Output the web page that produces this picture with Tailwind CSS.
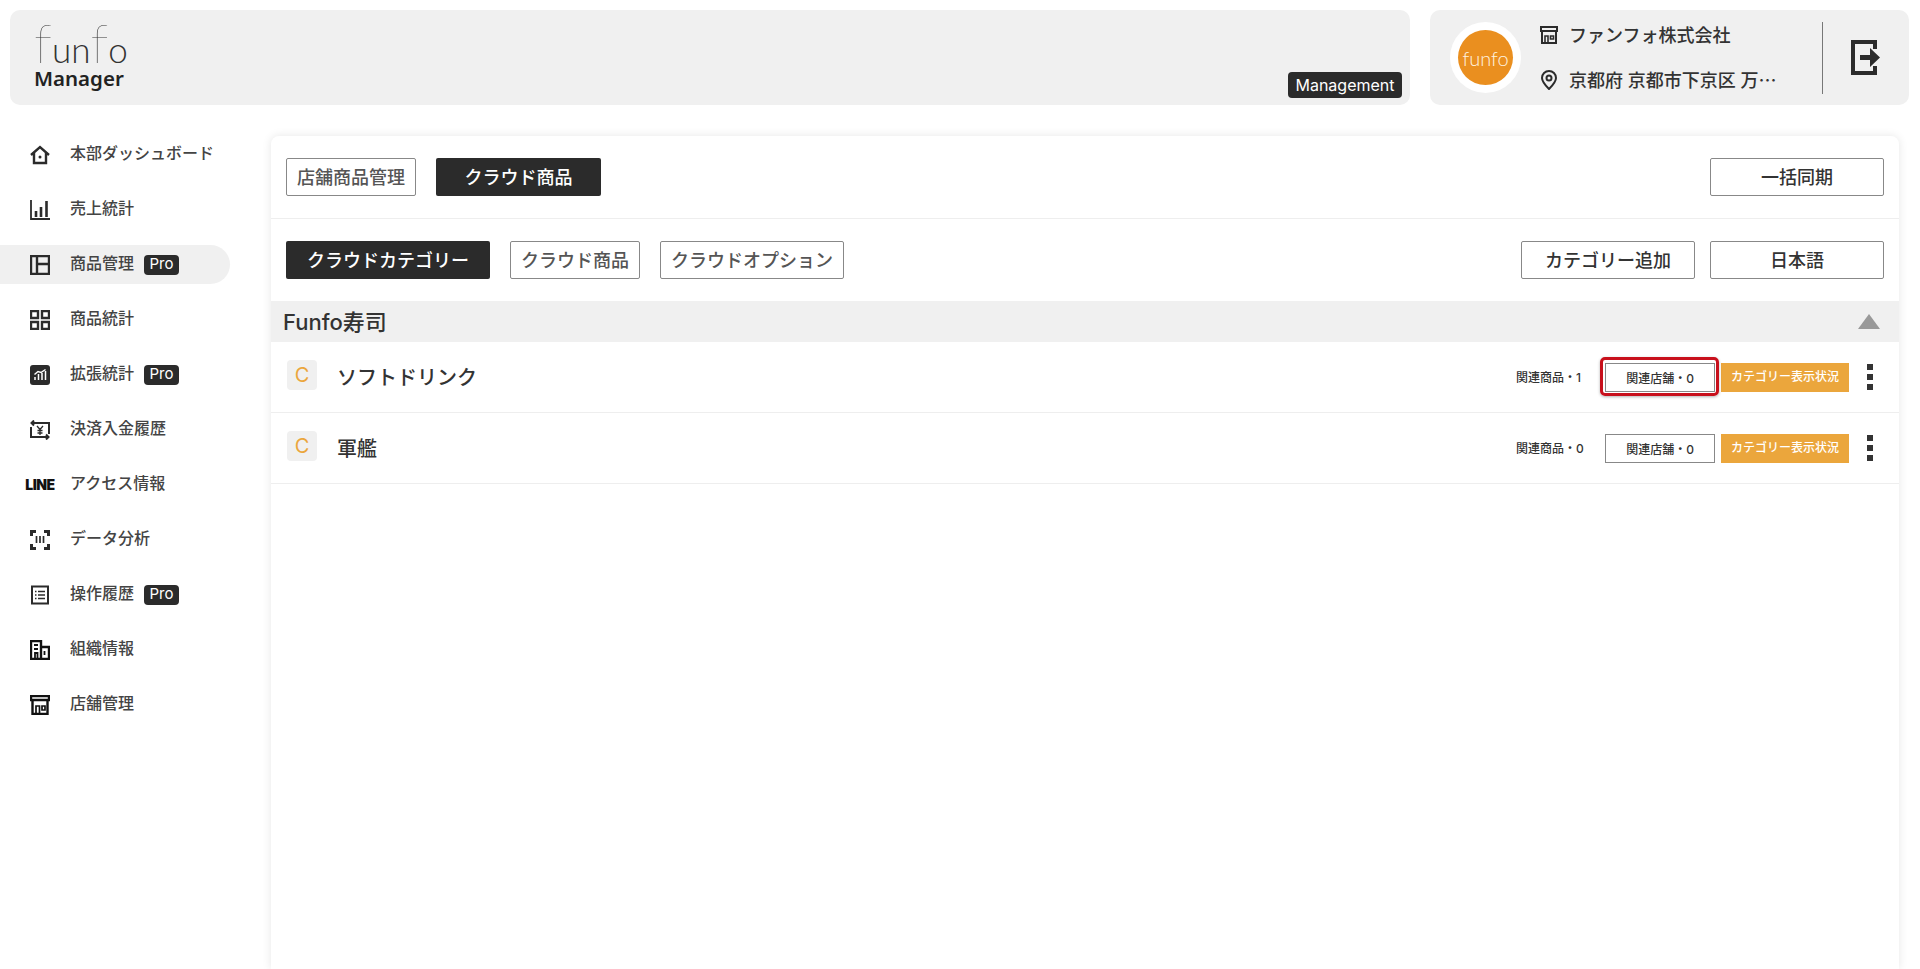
<!DOCTYPE html>
<html lang="ja">
<head>
<meta charset="utf-8">
<script src="https://cdn.jsdelivr.net/npm/@tailwindcss/browser@4"></script>
<title>funfo Manager</title>
</head>
<body class="bg-white text-[#333] font-['Inter','Noto_Sans_CJK_JP',sans-serif]">
<div class="flex flex-col h-[969px] overflow-hidden">
  <header class="flex gap-[20px] pt-[10px] pl-[10px] pr-[11px] h-[105px] shrink-0">
    <div class="flex-1 bg-[#f0f0f0] rounded-[10px] flex justify-between items-end pl-[24px] pr-[8px] pb-[7px]">
      <div class="flex flex-col self-start">
        <span class="font-['Lato',sans-serif] font-light h-[56px] leading-[66px] text-[35px] text-[#333] whitespace-nowrap"><span class="font-thin text-[54px]">f</span>un<span class="font-thin text-[54px]">f</span>o</span>
        <span class="font-['Noto_Sans',sans-serif] font-semibold text-[20.5px] leading-[24px] text-[#222]">Manager</span>
      </div>
      <span class="bg-[#2b2b2b] text-white rounded-[4px] w-[114px] h-[26px] flex items-center justify-center text-[16px]">Management</span>
    </div>
    <div class="w-[479px] bg-[#f0f0f0] rounded-[10px] flex items-center pl-[20px]">
      <div class="w-[71px] h-[71px] rounded-full bg-white flex items-center justify-center shrink-0">
        <div class="w-[55px] h-[55px] rounded-full bg-[#ea8f1f] flex items-center justify-center font-['Lato',sans-serif] font-light text-[#fff3e0] text-[20px]">funfo</div>
      </div>
      <div class="ml-[19px] w-[282px] flex flex-col gap-[24px] text-[18px] leading-[21px] text-[#333] font-medium">
        <div class="flex items-center gap-[11px]">
          <svg class="w-[18px] h-[18px] shrink-0" viewBox="0 0 18 18" fill="none" stroke="#2b2b2b" stroke-width="2"><path d="M1 1h16v4H1zM2 5v12h14V5"/><path d="M5 16v-6h3v6M10.500 10h3v3h-3z" stroke-width="1.600"/></svg>
          <span>ファンフォ株式会社</span>
        </div>
        <div class="flex items-center gap-[11px]">
          <svg class="w-[18px] h-[20px] shrink-0" viewBox="0 0 18 20" fill="none" stroke="#2b2b2b" stroke-width="2"><path d="M9 19c-4-4-7-7-7-11a7 7 0 0 1 14 0c0 4-3 7-7 11z"/><circle cx="9" cy="8" r="2.500"/></svg>
          <span class="whitespace-nowrap">京都府 京都市下京区 万⋯</span>
        </div>
      </div>
      <div class="w-px h-[72px] bg-[#777] shrink-0"></div>
      <svg class="ml-[28px] w-[30px] h-[35px]" viewBox="0 0 30 35" fill="none"><path d="M24 9V2H2v31h22v-7" stroke="#2b2b2b" stroke-width="4"/><path d="M9 15h10V8l10 9.500L19 27v-7H9z" fill="#2b2b2b"/></svg>
    </div>
  </header>

  <div class="flex flex-1 min-h-0">
    <nav class="w-[271px] shrink-0 pt-[30px] flex flex-col gap-[16px] text-[16px] font-medium text-[#444]">
      <a class="w-[230px] h-[39px] flex items-center">
        <span class="w-[70px] flex justify-center pl-[10px] shrink-0"><svg class="w-[20px] h-[20px]" viewBox="0 0 20 20" fill="none" stroke="#2b2b2b" stroke-width="2.400"><path d="M1 10 10 2l9 8"/><path d="M4 8v10h12V8"/><circle cx="10" cy="12" r="1.500" fill="#2b2b2b" stroke="none"/></svg></span>
        <span class="-mt-[4px]">本部ダッシュボード</span>
      </a>
      <a class="w-[230px] h-[39px] flex items-center">
        <span class="w-[70px] flex justify-center pl-[10px] shrink-0"><svg class="w-[20px] h-[20px]" viewBox="0 0 20 20" fill="none" stroke="#2b2b2b"><path d="M1 0v19h19" stroke-width="1.800"/><path d="M6 11v6M11 7v10M16.500 1v16" stroke-width="2.600"/></svg></span>
        <span class="-mt-[4px]">売上統計</span>
      </a>
      <a class="w-[230px] h-[39px] flex items-center bg-[#f0f0f0] rounded-r-full">
        <span class="w-[70px] flex justify-center pl-[10px] shrink-0"><svg class="w-[20px] h-[20px]" viewBox="0 0 20 20" fill="none" stroke="#2b2b2b" stroke-width="2.400"><path d="M1 1h18v18H1zM7 1v18M7 9h12"/></svg></span>
        <span class="-mt-[4px]">商品管理</span><span class="ml-[10px] bg-[#2b2b2b] text-white rounded-[4px] w-[35px] h-[20px] flex items-center justify-center text-[15px] font-normal">Pro</span>
      </a>
      <a class="w-[230px] h-[39px] flex items-center">
        <span class="w-[70px] flex justify-center pl-[10px] shrink-0"><svg class="w-[20px] h-[20px]" viewBox="0 0 20 20" fill="none" stroke="#2b2b2b" stroke-width="2.400"><path d="M1 1h7v7H1zM12 1h7v7h-7zM1 12h7v7H1zM12 12h7v7h-7z"/></svg></span>
        <span class="-mt-[4px]">商品統計</span>
      </a>
      <a class="w-[230px] h-[39px] flex items-center">
        <span class="w-[70px] flex justify-center pl-[10px] shrink-0"><svg class="w-[20px] h-[20px]" viewBox="0 0 20 20"><rect width="20" height="20" rx="3" fill="#2b2b2b"/><path d="M5 15v-3M8.500 15V9M12 15V8M15.500 15V6M4.500 9.500 8 6.500l3 1 4.500-3" stroke="#fff" stroke-width="1.500" fill="none"/></svg></span>
        <span class="-mt-[4px]">拡張統計</span><span class="ml-[10px] bg-[#2b2b2b] text-white rounded-[4px] w-[35px] h-[20px] flex items-center justify-center text-[15px] font-normal">Pro</span>
      </a>
      <a class="w-[230px] h-[39px] flex items-center">
        <span class="w-[70px] flex justify-center pl-[10px] shrink-0"><svg class="w-[20px] h-[20px]" viewBox="0 0 20 20" fill="none" stroke="#2b2b2b" stroke-width="2"><path d="M4 0.500 1.500 3 4 5.500M1.500 3H19v11M16 19.500l2.500-2.500L16 14.500M18.500 17H1V7"/><path d="M7 6l3 3.500L13 6M10 9.500V15M7.500 10.500h5M7.500 13h5" stroke-width="1.300"/></svg></span>
        <span class="-mt-[4px]">決済入金履歴</span>
      </a>
      <a class="w-[230px] h-[39px] flex items-center">
        <span class="w-[70px] flex justify-center pl-[10px] shrink-0 font-black text-[14px] tracking-[-0.5px] text-[#111]">LINE</span>
        <span class="-mt-[4px]">アクセス情報</span>
      </a>
      <a class="w-[230px] h-[39px] flex items-center">
        <span class="w-[70px] flex justify-center pl-[10px] shrink-0"><svg class="w-[20px] h-[20px]" viewBox="0 0 20 20" fill="none" stroke="#2b2b2b"><path d="M6 1.500H1.500V6M14 1.500h4.500V6M6 18.500H1.500V14M14 18.500h4.500V14" stroke-width="3"/><path d="M6.500 6v7M10 6v7M13.500 6v7" stroke-width="1.700"/></svg></span>
        <span class="-mt-[4px]">データ分析</span>
      </a>
      <a class="w-[230px] h-[39px] flex items-center">
        <span class="w-[70px] flex justify-center pl-[10px] shrink-0"><svg class="w-[20px] h-[20px]" viewBox="0 0 20 20" fill="none" stroke="#2b2b2b"><path d="M2 1.500h16v17H2z" stroke-width="2"/><path d="M5 6.500h1.500M8 6.500h7M5 10h1.500M8 10h7M5 13.500h1.500M8 13.500h7" stroke-width="1.700"/></svg></span>
        <span class="-mt-[4px]">操作履歴</span><span class="ml-[10px] bg-[#2b2b2b] text-white rounded-[4px] w-[35px] h-[20px] flex items-center justify-center text-[15px] font-normal">Pro</span>
      </a>
      <a class="w-[230px] h-[39px] flex items-center">
        <span class="w-[70px] flex justify-center pl-[10px] shrink-0"><svg class="w-[20px] h-[20px]" viewBox="0 0 20 20" fill="none" stroke="#111" stroke-width="2.400"><path d="M1 19V1h10v18M11 7h8v12M0 19h20"/><path d="M4 5h4M4 9h4M5 19v-6h2.500v6M14.500 11v4" stroke-width="1.800"/></svg></span>
        <span class="-mt-[4px]">組織情報</span>
      </a>
      <a class="w-[230px] h-[39px] flex items-center">
        <span class="w-[70px] flex justify-center pl-[10px] shrink-0"><svg class="w-[20px] h-[20px]" viewBox="0 0 20 20" fill="none" stroke="#111" stroke-width="2.400"><path d="M1 1h18v4H1zM2.500 5v14h15V5"/><path d="M6 18v-7h3.500v7M12 11h3v4h-3z" stroke-width="1.700"/></svg></span>
        <span class="-mt-[4px]">店舗管理</span>
      </a>
    </nav>

    <main class="w-[1628px] mt-[31px] bg-white rounded-t-[8px] shadow-[0_0_10px_rgba(0,0,0,0.1)] flex flex-col">
      <div class="h-[83px] shrink-0 border-b border-[#eeeeee] flex items-center justify-between px-[15px] text-[18px] font-medium">
        <div class="flex gap-[20px]">
          <button class="w-[130px] h-[38px] border border-[#888] rounded-[2px] text-[#555]">店舗商品管理</button>
          <button class="w-[165px] h-[38px] bg-[#2b2b2b] rounded-[2px] text-white">クラウド商品</button>
        </div>
        <button class="w-[174px] h-[38px] border border-[#888] rounded-[2px] text-[#333]">一括同期</button>
      </div>
      <div class="h-[82px] shrink-0 flex items-center justify-between px-[15px] text-[18px] font-medium">
        <div class="flex gap-[20px]">
          <button class="w-[204px] h-[38px] bg-[#2b2b2b] rounded-[2px] text-white">クラウドカテゴリー</button>
          <button class="w-[130px] h-[38px] border border-[#888] rounded-[2px] text-[#555]">クラウド商品</button>
          <button class="w-[184px] h-[38px] border border-[#888] rounded-[2px] text-[#555]">クラウドオプション</button>
        </div>
        <div class="flex gap-[15px]">
          <button class="w-[174px] h-[38px] border border-[#888] rounded-[2px] text-[#333]">カテゴリー追加</button>
          <button class="w-[174px] h-[38px] border border-[#888] rounded-[2px] text-[#333]">日本語</button>
        </div>
      </div>
      <div class="h-[41px] shrink-0 bg-[#f0f0f0] flex items-center justify-between pl-[12px] pr-[19px] text-[22px] text-[#333] font-medium">
        <span class="pt-[1px]">Funfo寿司</span>
        <svg class="w-[22px] h-[15px]" viewBox="0 0 22 15"><path d="M11 0 22 15H0z" fill="#999"/></svg>
      </div>

      <div class="h-[71px] shrink-0 border-b border-[#eeeeee] flex items-center pl-[16px] pr-[26px]">
        <span class="w-[30px] h-[30px] rounded-[4px] bg-[#f0f0f0] flex items-center justify-center text-[#eba63c] text-[20px] -mt-[5px]">C</span>
        <span class="ml-[20px] mt-[1px] text-[20px] text-[#333] font-medium">ソフトドリンク</span>
        <span class="ml-auto mt-[1px] w-[89px] text-[12px] text-[#333] font-medium">関連商品・1</span>
        <div class="relative">
          <button class="w-[110px] h-[29px] border border-[#888] text-[12px] text-[#333] font-medium pt-[3px]">関連店舗・0</button>
          <div class="absolute -left-[5px] -right-[4px] -top-[6px] -bottom-[4px] border-[3px] border-[#c8101c] rounded-[5px] shadow-[0_1px_3px_rgba(0,0,0,0.3)]"></div>
        </div>
        <button class="ml-[6px] w-[128px] h-[29px] bg-[#eba63c] text-white text-[12px] font-medium">カテゴリー表示状況</button>
        <div class="ml-[18px] flex flex-col gap-[4px]"><i class="block w-[6px] h-[6px] bg-[#333]"></i><i class="block w-[6px] h-[6px] bg-[#333]"></i><i class="block w-[6px] h-[6px] bg-[#333]"></i></div>
      </div>
      <div class="h-[71px] shrink-0 border-b border-[#eeeeee] flex items-center pl-[16px] pr-[26px]">
        <span class="w-[30px] h-[30px] rounded-[4px] bg-[#f0f0f0] flex items-center justify-center text-[#eba63c] text-[20px] -mt-[5px]">C</span>
        <span class="ml-[20px] mt-[1px] text-[20px] text-[#333] font-medium">軍艦</span>
        <span class="ml-auto mt-[1px] w-[89px] text-[12px] text-[#333] font-medium">関連商品・0</span>
        <button class="w-[110px] h-[29px] border border-[#888] text-[12px] text-[#333] font-medium pt-[3px]">関連店舗・0</button>
        <button class="ml-[6px] w-[128px] h-[29px] bg-[#eba63c] text-white text-[12px] font-medium">カテゴリー表示状況</button>
        <div class="ml-[18px] flex flex-col gap-[4px]"><i class="block w-[6px] h-[6px] bg-[#333]"></i><i class="block w-[6px] h-[6px] bg-[#333]"></i><i class="block w-[6px] h-[6px] bg-[#333]"></i></div>
      </div>
    </main>
  </div>
</div>
</body>
</html>
